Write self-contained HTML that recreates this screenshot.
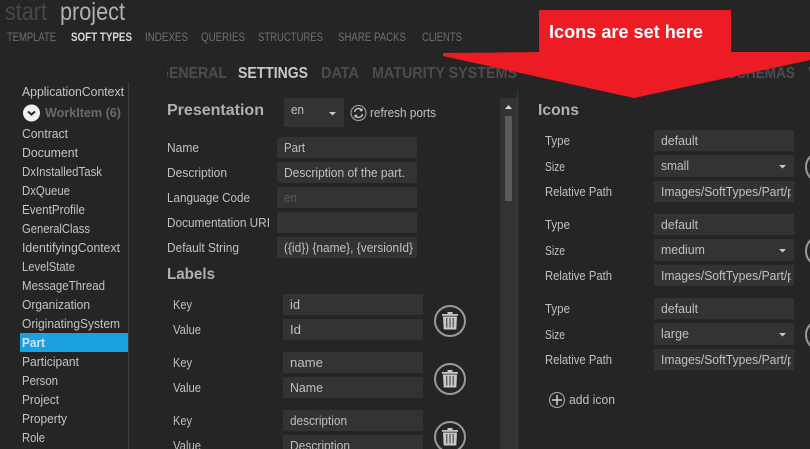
<!DOCTYPE html>
<html><head><meta charset="utf-8"><style>
html,body{margin:0;padding:0;background:#252525;width:810px;height:449px;overflow:hidden}
svg{display:block;font-family:"Liberation Sans",sans-serif}
.s text{font-size:13px;fill:#c4c4c4}
text.t{font-size:13px;fill:#c0c0c0}
text.h{font-size:16px;font-weight:bold;fill:#b0b0b0}
text.n{font-size:12px;fill:#707070}
text.b{font-size:16px;font-weight:bold;fill:#4c4c4c}
rect.i{fill:#333}
</style></head><body>
<svg width="810" height="449" viewBox="0 0 810 449" xmlns="http://www.w3.org/2000/svg">
<defs>
<g id="trash">
<circle cx="0" cy="0" r="15" fill="none" stroke="#9a9a9a" stroke-width="2"/>
<path d="M-2.5-9h5v2h-5zM-8-7h16v1.800h-16zM-7-4.500h14l-.7 13h-12.600z" fill="#c8c8c8"/>
<path d="M-3.200-3v9.500M0-3v9.500M3.200-3v9.500" stroke="#3a3a3a" stroke-width="1"/>
</g>
</defs>
<rect width="810" height="449" fill="#252525"/>
<text x="5" y="20" font-size="25" fill="#484848" textLength="42" lengthAdjust="spacingAndGlyphs">start</text>
<text x="60" y="20" font-size="25" fill="#b0b0b0" textLength="65" lengthAdjust="spacingAndGlyphs">project</text>

<text class="n" x="7" y="41" textLength="49" lengthAdjust="spacingAndGlyphs">TEMPLATE</text>
<text class="n" x="71" y="41" textLength="61" lengthAdjust="spacingAndGlyphs" style="font-weight:bold;fill:#d8d8d8">SOFT TYPES</text>
<text class="n" x="145" y="41" textLength="43" lengthAdjust="spacingAndGlyphs">INDEXES</text>
<text class="n" x="201" y="41" textLength="44" lengthAdjust="spacingAndGlyphs">QUERIES</text>
<text class="n" x="258" y="41" textLength="65" lengthAdjust="spacingAndGlyphs">STRUCTURES</text>
<text class="n" x="338" y="41" textLength="68" lengthAdjust="spacingAndGlyphs">SHARE PACKS</text>
<text class="n" x="422" y="41" textLength="40" lengthAdjust="spacingAndGlyphs">CLIENTS</text>

<svg x="167" y="60" width="70" height="30"><text class="b" x="-9" y="18" textLength="69" lengthAdjust="spacingAndGlyphs">GENERAL</text></svg>
<text class="b" x="238" y="78" textLength="70" lengthAdjust="spacingAndGlyphs" style="fill:#c8c8c8">SETTINGS</text>
<text class="b" x="321" y="78" textLength="38" lengthAdjust="spacingAndGlyphs">DATA</text>
<text class="b" x="372" y="78" textLength="145" lengthAdjust="spacingAndGlyphs">MATURITY SYSTEMS</text>
<text class="b" x="727" y="78" textLength="68" lengthAdjust="spacingAndGlyphs">SCHEMAS</text>
<text class="b" x="808" y="78">V</text>

<rect x="128" y="82" width="1" height="367" fill="#3c3c3c"/>
<rect x="20" y="333" width="108" height="19" fill="#1ba1e2"/>
<g class="s">
<text x="22" y="96" textLength="102" lengthAdjust="spacingAndGlyphs">ApplicationContext</text>
<text x="45" y="117" textLength="76" lengthAdjust="spacingAndGlyphs" style="font-weight:bold;fill:#6a6a6a">WorkItem (6)</text>
<text x="22" y="138" textLength="46" lengthAdjust="spacingAndGlyphs">Contract</text>
<text x="22" y="157" textLength="56" lengthAdjust="spacingAndGlyphs">Document</text>
<text x="22" y="176" textLength="80" lengthAdjust="spacingAndGlyphs">DxInstalledTask</text>
<text x="22" y="195" textLength="48" lengthAdjust="spacingAndGlyphs">DxQueue</text>
<text x="22" y="214" textLength="63" lengthAdjust="spacingAndGlyphs">EventProfile</text>
<text x="22" y="233" textLength="68" lengthAdjust="spacingAndGlyphs">GeneralClass</text>
<text x="22" y="252" textLength="98" lengthAdjust="spacingAndGlyphs">IdentifyingContext</text>
<text x="22" y="271" textLength="53" lengthAdjust="spacingAndGlyphs">LevelState</text>
<text x="22" y="290" textLength="83" lengthAdjust="spacingAndGlyphs">MessageThread</text>
<text x="22" y="309" textLength="68" lengthAdjust="spacingAndGlyphs">Organization</text>
<text x="22" y="328" textLength="98" lengthAdjust="spacingAndGlyphs">OriginatingSystem</text>
<text x="22" y="347" textLength="23" lengthAdjust="spacingAndGlyphs" style="font-weight:bold;fill:#d0e4ee">Part</text>
<text x="22" y="366" textLength="57" lengthAdjust="spacingAndGlyphs">Participant</text>
<text x="22" y="385" textLength="36" lengthAdjust="spacingAndGlyphs">Person</text>
<text x="22" y="404" textLength="37" lengthAdjust="spacingAndGlyphs">Project</text>
<text x="22" y="423" textLength="45" lengthAdjust="spacingAndGlyphs">Property</text>
<text x="22" y="442" textLength="23" lengthAdjust="spacingAndGlyphs">Role</text>
</g>
<circle cx="31.500" cy="113" r="8.500" fill="#f0f0f0"/>
<path d="M28 111.500l3.500 3 3.500-3" fill="none" stroke="#252525" stroke-width="2"/>

<text class="h" x="167" y="115" textLength="97" lengthAdjust="spacingAndGlyphs">Presentation</text>
<rect class="i" x="284" y="98" width="60" height="29"/>
<text class="t" x="291" y="114" textLength="13" lengthAdjust="spacingAndGlyphs">en</text>
<path d="M329 112h7l-3.500 3.500z" fill="#c8c8c8"/>
<circle cx="358.500" cy="113" r="7.500" fill="none" stroke="#9a9a9a" stroke-width="1.200"/>
<path d="M354.500 112a4 4 0 0 1 7-2M362.500 114a4 4 0 0 1-7 2" fill="none" stroke="#d0d0d0" stroke-width="1.300"/>
<path d="M362.500 108v3.200h-3.200zM354.500 118v-3.200h3.200z" fill="#d0d0d0"/>
<text class="t" x="370" y="117" textLength="66" lengthAdjust="spacingAndGlyphs">refresh ports</text>

<g>
<text class="t" x="167" y="152" textLength="32" lengthAdjust="spacingAndGlyphs">Name</text>
<text class="t" x="167" y="177" textLength="60" lengthAdjust="spacingAndGlyphs">Description</text>
<text class="t" x="167" y="202" textLength="83" lengthAdjust="spacingAndGlyphs">Language Code</text>
<text class="t" x="167" y="227" textLength="103" lengthAdjust="spacingAndGlyphs">Documentation URI</text>
<text class="t" x="167" y="252" textLength="72" lengthAdjust="spacingAndGlyphs">Default String</text>
<rect class="i" x="277" y="137" width="140" height="21"/>
<rect class="i" x="277" y="162" width="140" height="21"/>
<rect class="i" x="277" y="187" width="140" height="21"/>
<rect class="i" x="277" y="212" width="140" height="21"/>
<rect class="i" x="277" y="237" width="140" height="21"/>
<text class="t" x="284" y="152" textLength="21" lengthAdjust="spacingAndGlyphs">Part</text>
<text class="t" x="284" y="177" textLength="121" lengthAdjust="spacingAndGlyphs">Description of the part.</text>
<text class="t" x="284" y="202" textLength="13" lengthAdjust="spacingAndGlyphs" style="fill:#5c5c5c">en</text>
<text class="t" x="284" y="252" textLength="129" lengthAdjust="spacingAndGlyphs">({id}) {name}, {versionId}</text>
</g>
<text class="h" x="167" y="279" textLength="48" lengthAdjust="spacingAndGlyphs">Labels</text>

<g>
<text class="t" x="173" y="309" textLength="19" lengthAdjust="spacingAndGlyphs">Key</text>
<text class="t" x="173" y="334" textLength="28" lengthAdjust="spacingAndGlyphs">Value</text>
<text class="t" x="173" y="367" textLength="19" lengthAdjust="spacingAndGlyphs">Key</text>
<text class="t" x="173" y="392" textLength="28" lengthAdjust="spacingAndGlyphs">Value</text>
<text class="t" x="173" y="425" textLength="19" lengthAdjust="spacingAndGlyphs">Key</text>
<text class="t" x="173" y="450" textLength="28" lengthAdjust="spacingAndGlyphs">Value</text>
<rect class="i" x="283" y="294" width="140" height="21"/>
<rect class="i" x="283" y="319" width="140" height="21"/>
<rect class="i" x="283" y="352" width="140" height="21"/>
<rect class="i" x="283" y="377" width="140" height="21"/>
<rect class="i" x="283" y="410" width="140" height="21"/>
<rect class="i" x="283" y="435" width="140" height="21"/>
<text class="t" x="290" y="309" textLength="10" lengthAdjust="spacingAndGlyphs">id</text>
<text class="t" x="290" y="334" textLength="11" lengthAdjust="spacingAndGlyphs">Id</text>
<text class="t" x="290" y="367" textLength="33" lengthAdjust="spacingAndGlyphs">name</text>
<text class="t" x="290" y="392" textLength="33" lengthAdjust="spacingAndGlyphs">Name</text>
<text class="t" x="290" y="425" textLength="57" lengthAdjust="spacingAndGlyphs">description</text>
<text class="t" x="290" y="450" textLength="60" lengthAdjust="spacingAndGlyphs">Description</text>
</g>
<use href="#trash" x="450" y="321"/>
<use href="#trash" x="450" y="379"/>
<use href="#trash" x="450" y="437"/>

<rect x="500" y="98" width="17" height="351" fill="#333"/>
<rect x="517" y="90" width="1" height="359" fill="#3c3c3c"/>
<path d="M505 109h7l-3.500-4z" fill="#d8d8d8"/>
<rect x="505" y="116" width="7" height="85" fill="#5a5a5a"/>

<text class="h" x="538" y="115" textLength="41" lengthAdjust="spacingAndGlyphs">Icons</text>

<g>
<text class="t" x="545" y="145" textLength="25" lengthAdjust="spacingAndGlyphs">Type</text>
<text class="t" x="545" y="171" textLength="20" lengthAdjust="spacingAndGlyphs">Size</text>
<text class="t" x="545" y="196" textLength="67" lengthAdjust="spacingAndGlyphs">Relative Path</text>
<text class="t" x="545" y="229" textLength="25" lengthAdjust="spacingAndGlyphs">Type</text>
<text class="t" x="545" y="255" textLength="20" lengthAdjust="spacingAndGlyphs">Size</text>
<text class="t" x="545" y="280" textLength="67" lengthAdjust="spacingAndGlyphs">Relative Path</text>
<text class="t" x="545" y="313" textLength="25" lengthAdjust="spacingAndGlyphs">Type</text>
<text class="t" x="545" y="339" textLength="20" lengthAdjust="spacingAndGlyphs">Size</text>
<text class="t" x="545" y="364" textLength="67" lengthAdjust="spacingAndGlyphs">Relative Path</text>
<rect class="i" x="654" y="130" width="140" height="21"/>
<rect class="i" x="654" y="155" width="140" height="22"/>
<rect class="i" x="654" y="181" width="140" height="21"/>
<rect class="i" x="654" y="214" width="140" height="21"/>
<rect class="i" x="654" y="239" width="140" height="22"/>
<rect class="i" x="654" y="265" width="140" height="21"/>
<rect class="i" x="654" y="298" width="140" height="21"/>
<rect class="i" x="654" y="323" width="140" height="22"/>
<rect class="i" x="654" y="349" width="140" height="21"/>
<text class="t" x="661" y="145" textLength="37" lengthAdjust="spacingAndGlyphs">default</text>
<text class="t" x="661" y="170" textLength="28" lengthAdjust="spacingAndGlyphs">small</text>
<text class="t" x="661" y="196" textLength="133" lengthAdjust="spacingAndGlyphs">Images/SoftTypes/Part/p</text>
<text class="t" x="661" y="229" textLength="37" lengthAdjust="spacingAndGlyphs">default</text>
<text class="t" x="661" y="254" textLength="44" lengthAdjust="spacingAndGlyphs">medium</text>
<text class="t" x="661" y="280" textLength="133" lengthAdjust="spacingAndGlyphs">Images/SoftTypes/Part/p</text>
<text class="t" x="661" y="313" textLength="37" lengthAdjust="spacingAndGlyphs">default</text>
<text class="t" x="661" y="338" textLength="28" lengthAdjust="spacingAndGlyphs">large</text>
<text class="t" x="661" y="364" textLength="133" lengthAdjust="spacingAndGlyphs">Images/SoftTypes/Part/p</text>
<rect x="791" y="181" width="3" height="21" fill="#333"/><rect x="794" y="181" width="16" height="21" fill="#252525"/>
<rect x="791" y="265" width="3" height="21" fill="#333"/><rect x="794" y="265" width="16" height="21" fill="#252525"/>
<rect x="791" y="349" width="3" height="21" fill="#333"/><rect x="794" y="349" width="16" height="21" fill="#252525"/>
</g>
<path d="M779 165h7l-3.500 3.500zM779 249h7l-3.500 3.500zM779 333h7l-3.500 3.500z" fill="#c8c8c8"/>
<circle cx="821" cy="167" r="15" fill="none" stroke="#9a9a9a" stroke-width="2"/>
<circle cx="821" cy="251" r="15" fill="none" stroke="#9a9a9a" stroke-width="2"/>
<circle cx="821" cy="335" r="15" fill="none" stroke="#9a9a9a" stroke-width="2"/>

<circle cx="557" cy="400" r="7.500" fill="none" stroke="#9a9a9a" stroke-width="1.200"/>
<path d="M552 400h10M557 395v10" stroke="#d0d0d0" stroke-width="1.500"/>
<text class="t" x="569" y="404" textLength="46" lengthAdjust="spacingAndGlyphs">add icon</text>

<polygon points="539,10 731,10 731,52 810,52 810,60 634,98 443,56 443,53 539,52" fill="#ed1c24"/>
<text x="549" y="38" font-size="18" font-weight="bold" fill="#fff" textLength="154" lengthAdjust="spacingAndGlyphs">Icons are set here</text>
</svg>
</body></html>
